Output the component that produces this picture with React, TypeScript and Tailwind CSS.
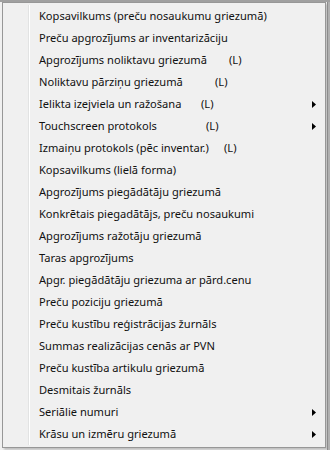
import React from 'react'

type MenuItem = {
  label: string
  // width of the label box, so that "(L)" lines up where the original put it
  tag?: number
  submenu?: boolean
}

const ITEMS: MenuItem[] = [
  { label: 'Kopsavilkums (preču nosaukumu griezumā)' },
  { label: 'Preču apgrozījums ar inventarizāciju' },
  { label: 'Apgrozījums noliktavu griezumā', tag: 190 },
  { label: 'Noliktavu pārziņu griezumā', tag: 176 },
  { label: 'Ielikta izejviela un ražošana', tag: 162, submenu: true },
  { label: 'Touchscreen protokols', tag: 167, submenu: true },
  { label: 'Izmaiņu protokols (pēc inventar.)', tag: 185 },
  { label: 'Kopsavilkums (lielā forma)' },
  { label: 'Apgrozījums piegādātāju griezumā' },
  { label: 'Konkrētais piegadātājs, preču nosaukumi' },
  { label: 'Apgrozījums ražotāju griezumā' },
  { label: 'Taras apgrozījums' },
  { label: 'Apgr. piegādātāju griezuma ar pārd.cenu' },
  { label: 'Preču poziciju griezumā' },
  { label: 'Preču kustību reģistrācijas žurnāls' },
  { label: 'Summas realizācijas cenās ar PVN' },
  { label: 'Preču kustība artikulu griezumā' },
  { label: 'Desmitais žurnāls' },
  { label: 'Seriālie numuri', submenu: true },
  { label: 'Krāsu un izmēru griezumā', submenu: true },
]

const Arrow = () => (
  <svg width="4" height="7" viewBox="0 0 4 7" className="ml-auto shrink-0">
    <path d="M0 0 L4 3.5 L0 7 Z" fill="#000" />
  </svg>
)

export default function App() {
  return (
    <div className="flex w-[330px] h-[450px] overflow-hidden bg-[#f0f0f0] border-t-2 border-[#a0a0a0]">
      <div
        className="flex ml-[2px] w-[324px] h-[446px] shrink-0 bg-[#f0f0f0] border border-[#979797] p-[2px] shadow-[2px_2px_2px_rgba(0,0,0,0.2)]"
        style={{ fontFamily: '"Noto Sans", "Open Sans", Arial, sans-serif' }}
      >
        {/* icon gutter */}
        <div className="w-[24px] shrink-0 border-r border-[#e2e3e3]" />
        <div className="w-[1px] shrink-0 bg-white" />

        <ul className="flex flex-col flex-1">
          {ITEMS.map((item) => (
            <li
              key={item.label}
              className="h-[22px] flex items-center pl-[9px] pr-[7px] text-[11.1px] text-[#111] whitespace-nowrap"
            >
              {item.tag !== undefined ? (
                <>
                  <span className="inline-block shrink-0" style={{ minWidth: item.tag }}>
                    {item.label}
                  </span>
                  <span>(L)</span>
                </>
              ) : (
                <span>{item.label}</span>
              )}
              {item.submenu && <Arrow />}
            </li>
          ))}
        </ul>
      </div>
      {/* edge of the window behind the menu */}
      <div className="ml-auto w-[3px] h-full bg-[#b0b0b0] border-l border-[#8c8c8c]" />
    </div>
  )
}
